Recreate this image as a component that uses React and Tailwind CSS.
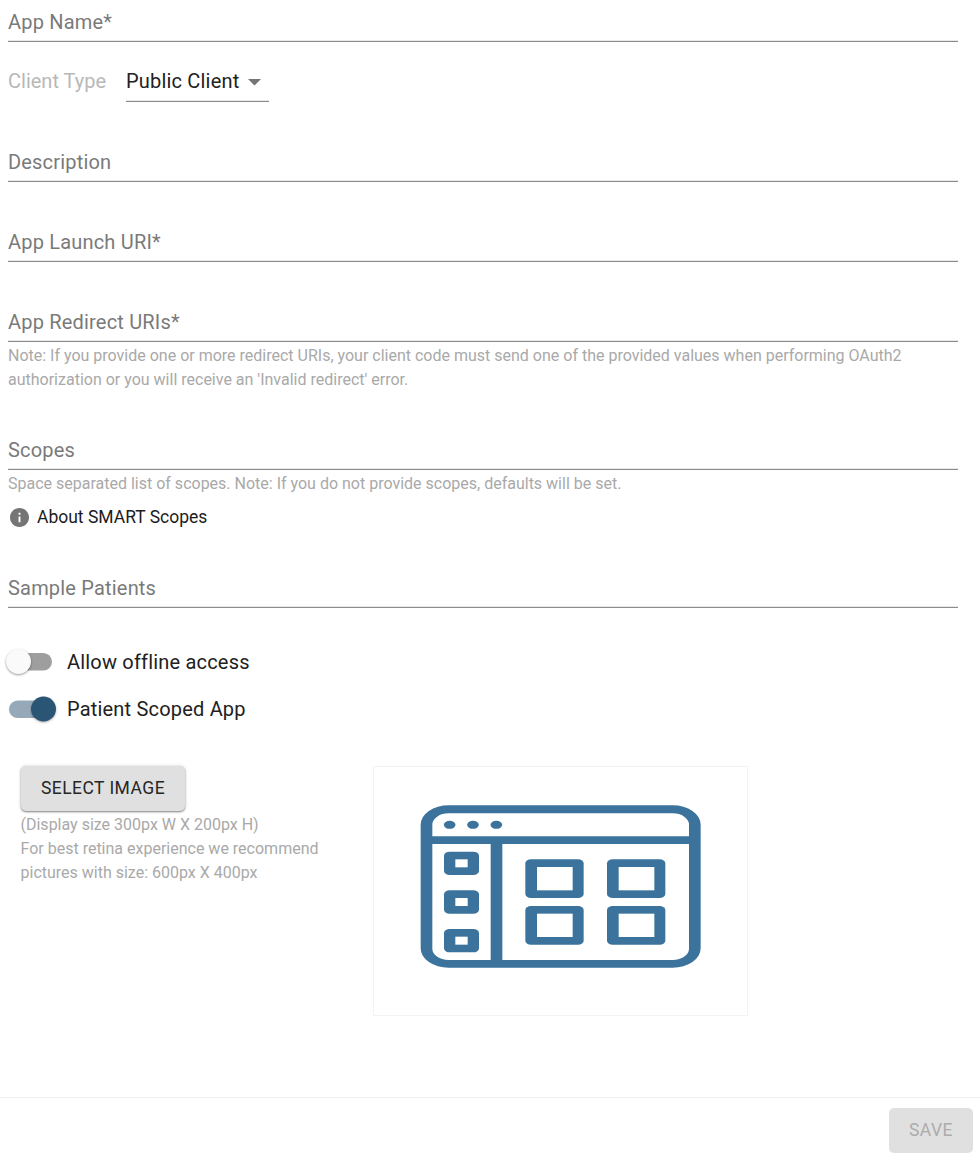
const LABEL = 'text-[20px] leading-[24px] font-normal';

function Field({ label, className = '' }) {
  return (
    <label
      className={`flex h-[42px] w-[950px] flex-col justify-end border-b border-[#8c8c8c] pb-[7px] tracking-[0.19px] text-[#7a7a7a] shadow-[inset_0_-1px_0_#e8e8e8] ${LABEL} ${className}`}
    >
      {label}
    </label>
  );
}

function Note({ children, className = '' }) {
  return <p className={`text-[16px] leading-[24px] text-[#a9a9a9] ${className}`}>{children}</p>;
}

function Toggle({ on, label }) {
  return (
    <div className="flex h-[47px] items-center">
      <svg className="-ml-2 h-[47px] w-[64px]" viewBox="0 0 64 47">
        {on ? (
          <>
            <rect x="9" y="15.500" width="43" height="17.5" rx="8.75" fill="#96a9b9" />
            <circle cx="43.500" cy="24" r="12.5" fill="#2b5574" className="drop-shadow-[0_1px_1px_rgba(0,0,0,0.3)]" />
          </>
        ) : (
          <>
            <rect x="9" y="15" width="43" height="17.5" rx="8.75" fill="#9e9e9e" />
            <circle cx="18.5" cy="23.5" r="12.5" fill="#fafafa" className="drop-shadow-[0_1px_1px_rgba(0,0,0,0.4)]" />
          </>
        )}
      </svg>
      <span className={`ml-[3px] tracking-[0.19px] text-[#212121] ${LABEL}`}>{label}</span>
    </div>
  );
}

const SIDE_TILES = [185, 301, 417];
const TILES = [
  [376, 208],
  [621, 208],
  [376, 348],
  [621, 348],
];

function AppPlaceholder() {
  return (
    <svg className="h-full w-full" viewBox="-78 -69 1119 744" fill="#3b739c">
      <path
        fillRule="evenodd"
        d="M146 46H818A84 58 0 0 1 902 104V475A84 58 0 0 1 818 533H146A84 58 0 0 1 62 475V104A84 58 0 0 1 146 46ZM97 139H867V104A49 34 0 0 0 818 70H146A49 34 0 0 0 97 104ZM97 162V475A49 34 0 0 0 146 510H272V162ZM307 162V510H818A49 34 0 0 0 867 475V162Z"
      />
      {[149, 219, 289].map((x) => (
        <ellipse key={x} cx={x} cy="104.500" rx="17.500" ry="12" />
      ))}
      {SIDE_TILES.map((y) => (
        <g key={y}>
          <rect x="132" y={y} width="105" height="70" rx="17" ry="12" />
          <rect x="166" y={y + 23} width="37" height="24" fill="#fff" />
        </g>
      ))}
      {TILES.map(([x, y]) => (
        <g key={`${x}-${y}`}>
          <rect x={x} y={y} width="175" height="116" rx="17" ry="12" />
          <rect x={x + 35} y={y + 23} width="107" height="70" fill="#fff" />
        </g>
      ))}
    </svg>
  );
}

export default function App() {
  return (
    <div className="flex h-[1159px] w-[980px] flex-col bg-white font-['Roboto',sans-serif]">
      <main className="flex flex-col pl-2">
        <Field label="App Name*" />
        <div className="mt-[18px] flex h-[42px]">
          <span className={`w-[118px] pt-[9px] text-[#b8b8b8] ${LABEL}`}>Client Type</span>
          <div className={`flex w-[143px] justify-between border-b border-[#8c8c8c] pt-[9px] pr-[8px] tracking-[0.19px] text-[#212121] shadow-[inset_0_-1px_0_#e8e8e8] ${LABEL}`}>
            Public Client
            <svg className="mt-[10px] h-[7px] w-[13px]" viewBox="0 0 13 7" fill="#757575">
              <path d="M0 0H13L6.500 6.500Z" />
            </svg>
          </div>
        </div>
        <Field label="Description" className="mt-[38px]" />
        <Field label="App Launch URI*" className="mt-[38px]" />
        <Field label="App Redirect URIs*" className="mt-[38px]" />
        <Note className="mt-[2px] w-[950px]">
          Note: If you provide one or more redirect URIs, your client code must send one of the provided values when performing OAuth2
          authorization or you will receive an 'Invalid redirect' error.
        </Note>
        <Field label="Scopes" className="mt-[36px]" />
        <Note className="mt-[2px]">Space separated list of scopes. Note: If you do not provide scopes, defaults will be set.</Note>
        <div className="mt-[9px] flex h-6 items-center">
          <svg className="ml-[2px] h-[19px] w-[19px]" viewBox="2 2 20 20" fill="#757575">
            <path d="M12 2C6.480 2 2 6.480 2 12s4.480 10 10 10 10-4.480 10-10S17.520 2 12 2zm1 15h-2v-6h2v6zm0-8h-2V7h2v2z" />
          </svg>
          <span className="ml-2 text-[17.5px] leading-6 font-normal text-[#1c1c1c]">About SMART Scopes</span>
        </div>
        <Field label="Sample Patients" className="mt-[37px]" />
        <div className="mt-[30px] flex flex-col">
          <Toggle label="Allow offline access" />
          <Toggle on label="Patient Scoped App" />
        </div>
        <div className="mt-[34px] ml-[12.5px] flex">
          <div className="flex w-[352.5px] flex-col items-start">
            <button className="ml-[0.5px] h-[45px] w-[164px] rounded-[5px] bg-[#e0e0e0] pb-[2px] text-[17.5px] leading-[30px] font-normal tracking-[0.45px] whitespace-nowrap text-[#262626] shadow-[0_1px_2px_rgba(0,0,0,0.45),0_0_4px_rgba(0,0,0,0.12)]">
              SELECT IMAGE
            </button>
            <Note className="mt-[2px] w-[310px]">
              (Display size 300px W X 200px H)
              <br />
              For best retina experience we recommend pictures with size: 600px X 400px
            </Note>
          </div>
          <div className="h-[250px] w-[375px] border border-[#f3f3f3]">
            <AppPlaceholder />
          </div>
        </div>
      </main>
      <footer className="mt-auto flex h-[62px] justify-end border-t border-[#f0f0f0] pt-[10px] pr-[7px]">
        <button disabled className="h-[45px] w-[84px] rounded-[5px] bg-[#e0e0e0] text-[17.5px] font-normal tracking-[0.45px] text-[#acacac]">
          SAVE
        </button>
      </footer>
    </div>
  );
}
